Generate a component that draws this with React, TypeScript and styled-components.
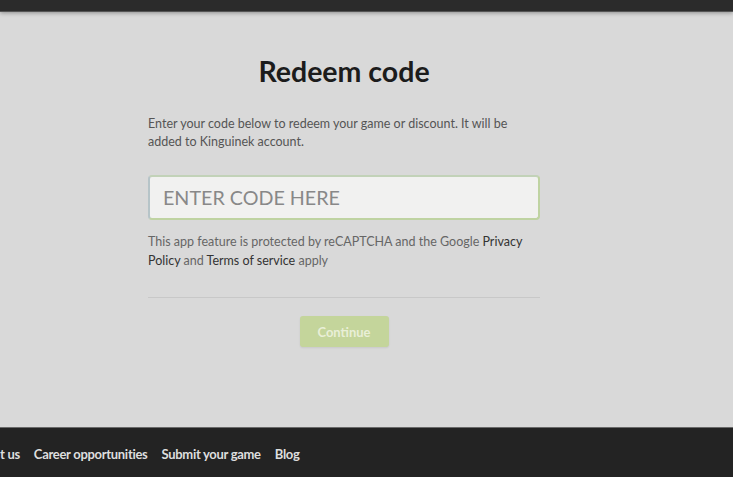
import React from "react";
import styled, { createGlobalStyle } from "styled-components";

const Global = createGlobalStyle`
  html, body { margin: 0; padding: 0; background: #d9d9d9; }
  body { font-family: Lato, "Open Sans", sans-serif; overflow: hidden; }
`;

const Page = styled.div`
  width: 733px;
  height: 477px;
  display: flex;
  flex-direction: column;
  background: #d9d9d9;
`;

const TopBar = styled.div`
  height: 11px;
  flex: none;
  background: #2b2b2b;
  box-shadow: 0 1px 0 #555, 0 2px 4px rgba(0, 0, 0, 0.35);
  position: relative;
  z-index: 1;
`;

const Main = styled.main`
  flex: 1;
  padding: 43px 0 0 148px;
`;

const Card = styled.div`
  width: 392px;
  display: flex;
  flex-direction: column;
`;

const Title = styled.h1`
  margin: 0;
  text-align: center;
  font-size: 28.5px;
  line-height: 34px;
  font-weight: 700;
  color: #1c1c1c;
`;

const Intro = styled.p`
  margin: 27px 0 0;
  font-size: 12.5px;
  line-height: 18px;
  color: #555;
`;

const CodeInput = styled.input`
  margin-top: 24px;
  height: 45px;
  box-sizing: border-box;
  border: 2px solid #bfd3a2;
  border-left-color: #b6c4c8;
  border-top-color: #c2d2b8;
  border-radius: 4px;
  background: #f1f1f0;
  padding: 0 13px;
  font-family: inherit;
  font-size: 19.7px;
  color: #333;
  outline: none;
  cursor: text;
  &::placeholder { color: #888; }
`;

const Notice = styled.p`
  margin: 12px 0 0;
  font-size: 12.5px;
  line-height: 19px;
  color: #666;
`;

const Strong = styled.span`
  color: #333;
`;

const Divider = styled.hr`
  margin: 27px 0 0;
  border: 0;
  height: 1px;
  background: #c8c8c8;
`;

const Actions = styled.div`
  display: flex;
  justify-content: center;
  margin-top: 18px;
`;

const ContinueButton = styled.button`
  width: 89px;
  height: 31px;
  border: 0;
  border-radius: 3px;
  background: #c4d59b;
  color: #e9efd7;
  font-family: inherit;
  font-size: 13px;
  font-weight: 700;
  box-shadow: 0 1px 2px rgba(0, 0, 0, 0.08);
`;

const Footer = styled.footer`
  box-sizing: border-box;
  height: 50px;
  flex: none;
  background: #232323;
  border-top: 1px solid #6a6a6a;
  display: flex;
  align-items: center;
  gap: 14px;
  margin-left: -30px;
  padding-top: 2px;
`;

const FooterLink = styled.a`
  color: #dedede;
  font-size: 13px;
  font-weight: 700;
  letter-spacing: -0.3px;
  text-decoration: none;
  white-space: nowrap;
`;

export default function App() {
  return (
    <>
      <Global />
      <Page>
        <TopBar />
        <Main>
          <Card>
            <Title>Redeem code</Title>
            <Intro>
              Enter your code below to redeem your game or discount. It will be added to Kinguinek account.
            </Intro>
            <CodeInput placeholder="ENTER CODE HERE" />
            <Notice>
              This app feature is protected by reCAPTCHA and the Google <Strong>Privacy Policy</Strong> and{" "}
              <Strong>Terms of service</Strong> apply
            </Notice>
            <Divider />
            <Actions>
              <ContinueButton>Continue</ContinueButton>
            </Actions>
          </Card>
        </Main>
        <Footer>
          <FooterLink href="#">About us</FooterLink>
          <FooterLink href="#">Career opportunities</FooterLink>
          <FooterLink href="#">Submit your game</FooterLink>
          <FooterLink href="#">Blog</FooterLink>
        </Footer>
      </Page>
    </>
  );
}
